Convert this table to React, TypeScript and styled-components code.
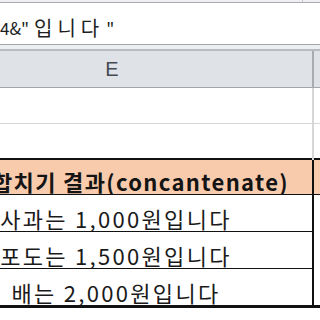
import React from 'react';
import styled, { createGlobalStyle } from 'styled-components';

const GlobalStyle = createGlobalStyle`
  html, body {
    margin: 0;
    padding: 0;
    background: #ffffff;
    overflow: hidden;
  }
  body {
    width: 320px;
    height: 320px;
    font-family: 'Noto Sans CJK KR', 'Noto Sans', sans-serif;
  }
`;

const Screen = styled.div`
  width: 320px;
  height: 320px;
  overflow: hidden;
  display: flex;
  flex-direction: column;
`;

const RibbonEdge = styled.div`
  display: flex;
  height: 2px;
  background: #eef0f2;
  border-bottom: 1px solid #a9abae;
`;

const RibbonPart = styled.div<{ $w?: number }>`
  width: ${(p) => (p.$w ? `${p.$w}px` : 'auto')};
  flex: ${(p) => (p.$w ? 'none' : '1')};
  border-right: ${(p) => (p.$w ? '1px solid #c4c6c9' : 'none')};
`;

const FormulaBar = styled.div`
  height: 42px;
  box-sizing: border-box;
  padding-top: 7px;
  display: flex;
  align-items: center;
  background: #ffffff;
  border-bottom: 1px solid #a4a6a9;
  font-size: 17px;
  color: #1e1e1e;
  white-space: nowrap;
`;

const Hangul = styled.span`
  margin-left: 5px;
  margin-right: 2px;
  font-size: 20px;
  letter-spacing: 5px;
`;

const Gap = styled.div`
  height: 4px;
  background: #eceef1;
  border-bottom: 2px solid #b9bcbf;
`;

const Grid = styled.div`
  display: grid;
  grid-template-columns: 400px 2px 10px;
  margin-left: -88px;
`;

const ColHead = styled.div`
  height: 36px;
  background: #dfe3e8;
  border-bottom: 1px solid #a3a6aa;
  display: flex;
  align-items: center;
  justify-content: center;
  font-family: 'Liberation Sans', Arial, sans-serif;
  font-size: 20px;
  color: #454a52;
`;

const Divider = styled.div<{ $tone: 'head' | 'grid' | 'ink' }>`
  background: ${(p) =>
    p.$tone === 'head' ? '#a8abaf' : p.$tone === 'ink' ? '#111111' : '#d6d6d6'};
`;

const Cell = styled.div<{ $h: number; $line?: string; $fill?: string }>`
  height: ${(p) => p.$h}px;
  background: ${(p) => p.$fill || '#ffffff'};
  border-bottom: ${(p) => p.$line || 'none'};
  display: flex;
  align-items: center;
  box-sizing: border-box;
  overflow: hidden;
`;

const HeadText = styled.span`
  font-size: 22px;
  font-weight: 700;
  letter-spacing: 1.35px;
  color: #141414;
  padding-left: 80px;
  padding-top: 8px;
  white-space: nowrap;
`;

const DataText = styled.span`
  flex: 1;
  text-align: center;
  padding-left: 8px;
  padding-top: 9px;
  font-size: 22px;
  letter-spacing: 2.3px;
  color: #1a1a1a;
  white-space: nowrap;
`;

const rows = ['사과는 1,000원입니다', '포도는 1,500원입니다', '배는 2,000원입니다'];

export default function App() {
  return (
    <Screen>
      <GlobalStyle />
      <RibbonEdge>
        <RibbonPart $w={302} />
        <RibbonPart />
      </RibbonEdge>
      <FormulaBar>
        4&amp;"<Hangul>입니다</Hangul>"
      </FormulaBar>
      <Gap />
      <Grid>
        <ColHead>E</ColHead>
        <Divider $tone="head" />
        <ColHead />

        <Cell $h={36} $line="1px solid #d6d6d6" />
        <Divider $tone="grid" />
        <Cell $h={36} $line="1px solid #d6d6d6" />

        <Cell $h={36} $line="2px solid #111" />
        <Divider $tone="grid" />
        <Cell $h={36} $line="2px solid #111" />

        <Cell $h={35} $fill="#f8cbad" $line="1px solid #111">
          <HeadText>합치기 결과(concantenate)</HeadText>
        </Cell>
        <Divider $tone="ink" />
        <Cell $h={35} $fill="#f8cbad" $line="1px solid #111" />

        {rows.map((r, i) => (
          <React.Fragment key={r}>
            <Cell $h={i === 2 ? 39 : 37} $line={i === 2 ? '3px solid #111' : '1px solid #111'}>
              <DataText>{r}</DataText>
            </Cell>
            <Divider $tone="ink" />
            <Cell $h={i === 2 ? 39 : 37} $line={i === 2 ? '3px solid #111' : 'none'} />
          </React.Fragment>
        ))}
      </Grid>
    </Screen>
  );
}
